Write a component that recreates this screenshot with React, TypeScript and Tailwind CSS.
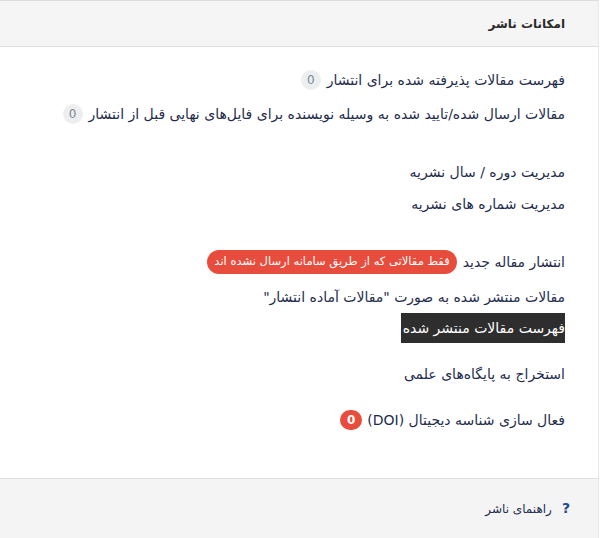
import React from "react";

const font = { fontFamily: '"DejaVu Sans", "Noto Sans", sans-serif' };

function GrayBadge() {
  return (
    <span className="inline-flex items-center justify-center h-[20px] min-w-[20px] px-[6px] rounded-full bg-[#eceeef] text-[#7d8a95] text-[12px] leading-none">
      0
    </span>
  );
}

function RedBadge({ children }: { children: React.ReactNode }) {
  return (
    <span className="inline-flex items-center justify-center h-[24px] px-[7px] rounded-full bg-[#e74c3c] text-white text-[11.5px] leading-none">
      {children}
    </span>
  );
}

export default function App() {
  return (
    <div className="bg-white w-[611px] h-[538px]" style={font}>
      <div dir="rtl" className="w-[599px] h-[538px] border-t border-r border-t-[#dcdcdc] border-r-[#e3e9ed] flex flex-col">
        <div className="h-[46px] bg-[#f5f5f5] border-b border-[#dfdfdf] flex items-center pr-[33px]">
          <span className="text-[12px] font-bold text-[#2b2b2b]">امکانات ناشر</span>
        </div>
        <div className="flex-1 pr-[33px] text-[14px] text-[#1f2d4d]">
          <div className="mt-[21px] h-[24px] flex items-center gap-[6px]">
            <span>فهرست مقالات پذیرفته شده برای انتشار</span>
            <GrayBadge />
          </div>
          <div className="mt-[10px] h-[24px] flex items-center gap-[6px]">
            <span>مقالات ارسال شده/تایید شده به وسیله نویسنده برای فایل‌های نهایی قبل از انتشار</span>
            <GrayBadge />
          </div>
          <div className="mt-[34px] h-[24px] flex items-center">
            <span>مدیریت دوره / سال نشریه</span>
          </div>
          <div className="mt-[8px] h-[24px] flex items-center">
            <span>مدیریت شماره های نشریه</span>
          </div>
          <div className="mt-[34px] h-[24px] flex items-center gap-[6px]">
            <span>انتشار مقاله جدید</span>
            <RedBadge>فقط مقالاتی که از طریق سامانه ارسال نشده اند</RedBadge>
          </div>
          <div className="mt-[11px] h-[24px] flex items-center">
            <span>مقالات منتشر شده به صورت "مقالات آماده انتشار"</span>
          </div>
          <div className="mt-[4px] h-[30px] flex items-center">
            <span className="bg-[#2e2e2e] text-white h-[30px] flex items-center pl-[2px]">فهرست مقالات منتشر شده</span>
          </div>
          <div className="mt-[19px] h-[24px] flex items-center">
            <span>استخراج به پایگاه‌های علمی</span>
          </div>
          <div className="mt-[22px] h-[24px] flex items-center gap-[5px]">
            <span>فعال سازی شناسه دیجیتال (DOI)</span>
            <span className="inline-flex items-center justify-center h-[20px] min-w-[22px] px-[6px] rounded-full bg-[#e74c3c] text-white text-[12px] font-bold leading-none">
              0
            </span>
          </div>
        </div>
        <div className="h-[60px] bg-[#f4f4f4] border-t border-[#dedede] flex items-center pr-[28px]">
          <span className="text-[14px] font-bold text-[#1e4b8f] ml-[10px]">?</span>
          <span className="text-[12px] text-[#1f2d4d]">راهنمای ناشر</span>
        </div>
      </div>
    </div>
  );
}
